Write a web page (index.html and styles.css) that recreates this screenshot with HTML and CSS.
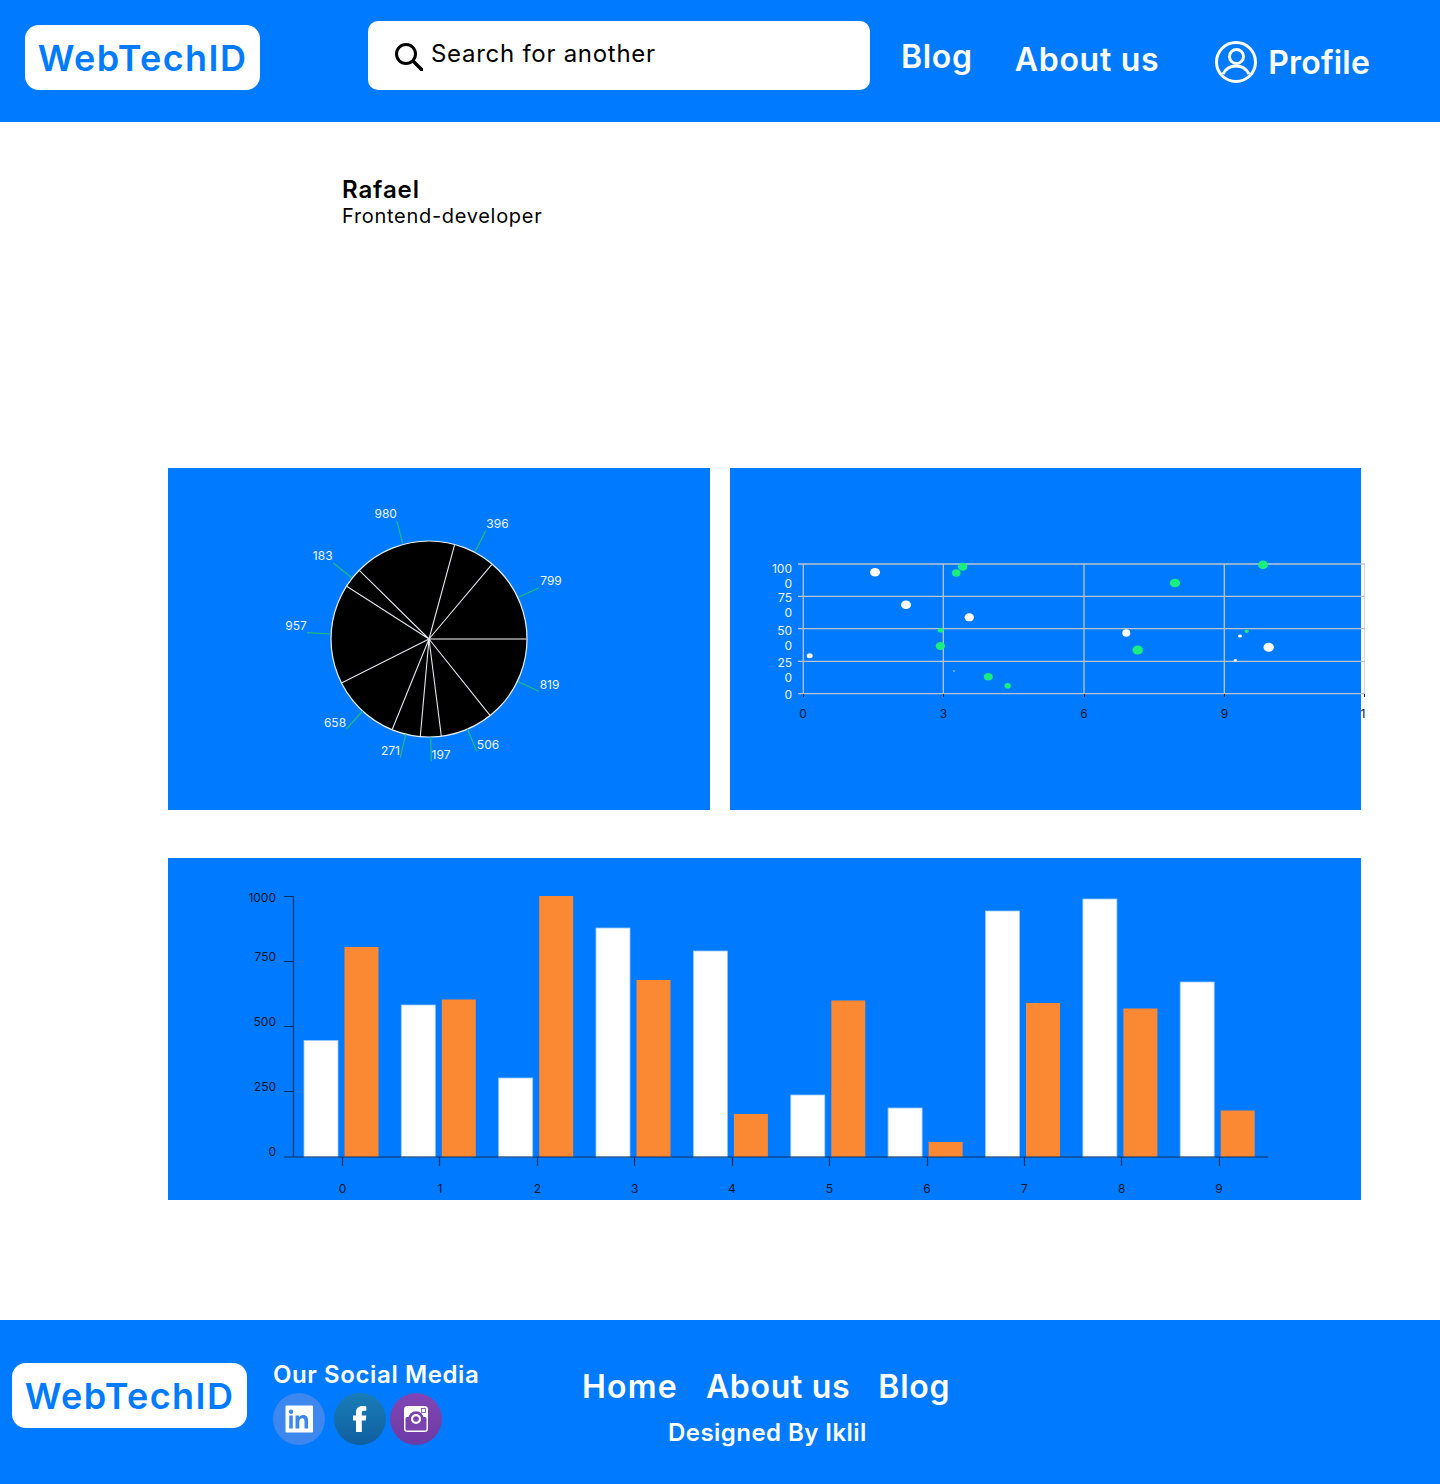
FILE: index.html
```html
<!DOCTYPE html>
<html lang="en">
<head>
<meta charset="utf-8">
<title>WebTechID</title>
<link rel="stylesheet" href="styles.css">
</head>
<body>
<header class="topbar">
  <a class="logo logo-top">WebTechID</a>
  <div class="search">
    <svg class="search-icon" width="28" height="28" viewBox="0 0 28 28"><circle cx="11" cy="11" r="9.5" fill="none" stroke="#000" stroke-width="3"/><path d="M18 18l9 9" stroke="#000" stroke-width="3.4" stroke-linecap="round"/></svg>
    <span class="search-text">Search for another</span>
  </div>
  <a class="nav nav-blog">Blog</a>
  <a class="nav nav-about">About us</a>
  <div class="profile">
    <svg width="42" height="42" viewBox="0 0 42 42" fill="none" stroke="#fff" stroke-width="3"><circle cx="21" cy="21" r="19.5"/><circle cx="21.500" cy="15.500" r="7"/><path d="M8 33c2.500-5 7-8 13-8s10.500 3 13 8"/></svg>
    <a class="nav nav-profile">Profile</a>
  </div>
</header>

<main class="content">
  <section class="person">
    <h1 class="person-name">Rafael</h1>
    <p class="person-role">Frontend-developer</p>
  </section>

  <section class="charts">
    <div class="card">
      <svg class="chart" width="542" height="342" viewBox="168 468 542 342">
        <circle cx="429" cy="639" r="98" fill="#000" stroke="#e8eef8" stroke-width="1.200"/>
        <g stroke="#e4e8ee" stroke-width="1.100">
          <path d="M429 639H527" stroke-width="1.600" stroke="#a8a8a8"/>
          <path d="M429 639L491.700 564.700M429 639L454.700 544.300M429 639L359.300 570.300M429 639L346.700 586.300M429 639L342 682.700M429 639L392.300 729.300M429 639L420.300 736.300M429 639L441.300 736M429 639L490 715.300"/>
        </g>
        <g stroke="#22bd78" stroke-width="1.200">
          <path d="M485.700 530.700L475 551.700M539.300 587.700L518.300 597.300M539 691.300L518.300 681.700M476.700 751.300L467.300 728.700M431.300 761.300L430.700 737M400.300 757.700L405.700 734.300M346.300 729L362.700 711M307 632.700L331 634M333.300 563L351.700 577.700M397 521.300L402.700 543.300"/>
        </g>
        <g class="pie-labels" text-anchor="middle">
          <text x="385.700" y="518">980</text>
          <text x="497.500" y="528">396</text>
          <text x="551" y="584.500">799</text>
          <text x="549.500" y="689">819</text>
          <text x="488" y="749">506</text>
          <text x="441" y="759">197</text>
          <text x="390.500" y="755">271</text>
          <text x="335" y="727">658</text>
          <text x="296" y="630">957</text>
          <text x="322.700" y="560">183</text>
        </g>
      </svg>
    </div>

    <div class="card card-scatter">
      <svg class="chart" width="635" height="342" viewBox="730 468 635 342">
        <g stroke="#b9c4d3" stroke-width="1.300">
          <path d="M798 564H1365M798 596.300H1365M798 628.700H1365M798 661.300H1365M798 693.700H1365"/>
          <path d="M803.300 564V694M943.300 564V694M1084 564V694M1224.300 564V694M1365 564V694"/>
        </g>
        <path d="M803.500 694V697M943.500 694V697M1084.500 694V697M1224.500 694V697M1364.500 694V697" stroke="#0a1a30" stroke-width="1"/>
        <g class="scatter-y" text-anchor="end">
          <text x="792" y="573">100</text>
          <text x="792" y="588">0</text>
          <text x="792" y="602">75</text>
          <text x="792" y="617">0</text>
          <text x="792" y="635">50</text>
          <text x="792" y="650">0</text>
          <text x="792" y="667">25</text>
          <text x="792" y="682">0</text>
          <text x="792" y="699">0</text>
        </g>
        <g class="axis-text" text-anchor="middle">
          <text x="803" y="718">0</text>
          <text x="943.500" y="718">3</text>
          <text x="1084" y="718">6</text>
          <text x="1224.500" y="718">9</text>
          <text x="1363" y="718">1</text>
        </g>
        <g fill="#fff">
          <ellipse cx="875" cy="572.300" rx="5" ry="4.300"/>
          <ellipse cx="906" cy="604.700" rx="5" ry="4.300"/>
          <ellipse cx="969.300" cy="617.300" rx="4.700" ry="4"/>
          <ellipse cx="809.700" cy="655.700" rx="3" ry="2.500"/>
          <ellipse cx="954" cy="671" rx=".7" ry=".7"/>
          <ellipse cx="1126.300" cy="633" rx="4" ry="3.700"/>
          <ellipse cx="1240" cy="636" rx="2" ry="1.600"/>
          <ellipse cx="1268.700" cy="647.300" rx="5.200" ry="4.500"/>
          <ellipse cx="1235.300" cy="660.300" rx="1.500" ry="1.200"/>
        </g>
        <g fill="#19ee7e">
          <ellipse cx="962.700" cy="566.700" rx="4.700" ry="4"/>
          <ellipse cx="956.300" cy="573" rx="4.300" ry="3.700"/>
          <ellipse cx="940.700" cy="630.300" rx="3" ry="2.300"/>
          <ellipse cx="940.300" cy="646" rx="4.700" ry="4"/>
          <ellipse cx="988.300" cy="676.700" rx="4.500" ry="3.800"/>
          <ellipse cx="1007.700" cy="685.700" rx="3.200" ry="2.800"/>
          <ellipse cx="1263" cy="564.700" rx="5" ry="4.300"/>
          <ellipse cx="1175" cy="583" rx="5.200" ry="4.300"/>
          <ellipse cx="1137.700" cy="650" rx="5.200" ry="4.500"/>
          <ellipse cx="1246.700" cy="631.300" rx="2" ry="1.700"/>
        </g>
      </svg>
    </div>

    <div class="card card-wide">
      <svg class="chart" width="1193" height="342" viewBox="168 858 1193 342">
        <g class="bars-white" fill="#fff" stroke="#9cc8ff" stroke-width=".8">
          <rect x="304" y="1040.500" width="34" height="116.500"/>
          <rect x="401.300" y="1005" width="34" height="152"/>
          <rect x="498.700" y="1078" width="34" height="79"/>
          <rect x="596" y="928" width="34" height="229"/>
          <rect x="693.400" y="951" width="34" height="206"/>
          <rect x="790.800" y="1095" width="34" height="62"/>
          <rect x="888.100" y="1108" width="34" height="49"/>
          <rect x="985.500" y="911" width="34" height="246"/>
          <rect x="1082.900" y="899" width="34" height="258"/>
          <rect x="1180.200" y="982" width="34" height="175"/>
        </g>
        <g fill="#fb8832">
          <rect x="344.500" y="947" width="34" height="210"/>
          <rect x="441.800" y="999.500" width="34" height="157.500"/>
          <rect x="539.200" y="896" width="34" height="261"/>
          <rect x="636.500" y="980" width="34" height="177"/>
          <rect x="733.900" y="1114" width="34" height="43"/>
          <rect x="831.300" y="1000.500" width="34" height="156.500"/>
          <rect x="928.600" y="1142" width="34" height="15"/>
          <rect x="1026" y="1003" width="34" height="154"/>
          <rect x="1123.400" y="1008.500" width="34" height="148.500"/>
          <rect x="1220.700" y="1110.500" width="34" height="46.500"/>
        </g>
        <g stroke="#0b2f5c" stroke-width="1.200">
          <path d="M293.500 896V1157M284 896.500H293.500M284 961.500H293.500M284 1026.500H293.500M284 1091.500H293.500M284 1157H1268"/>
          <path d="M342.500 1157V1166M439.500 1157V1166M537.500 1157V1166M634.500 1157V1166M732.500 1157V1166M829.500 1157V1166M927.500 1157V1166M1024.500 1157V1166M1121.500 1157V1166M1219.500 1157V1166"/>
        </g>
        <g class="axis-text" text-anchor="end">
          <text x="276" y="902">1000</text>
          <text x="276" y="961">750</text>
          <text x="276" y="1026">500</text>
          <text x="276" y="1091">250</text>
          <text x="276" y="1156">0</text>
        </g>
        <g class="axis-text" text-anchor="middle">
          <text x="342.500" y="1193">0</text>
          <text x="440" y="1193">1</text>
          <text x="537.300" y="1193">2</text>
          <text x="634.700" y="1193">3</text>
          <text x="732" y="1193">4</text>
          <text x="829.500" y="1193">5</text>
          <text x="927" y="1193">6</text>
          <text x="1024.300" y="1193">7</text>
          <text x="1121.700" y="1193">8</text>
          <text x="1219" y="1193">9</text>
        </g>
      </svg>
    </div>
  </section>
</main>

<footer class="footer">
  <a class="logo logo-bottom">WebTechID</a>
  <div class="social">
    <h2 class="social-title">Our Social Media</h2>
    <div class="social-icons">
      <a class="social-btn social-in">
        <svg width="28" height="28" viewBox="0 0 28 28"><rect x=".5" y=".5" width="27.500" height="27" rx="1" fill="#fff"/><g fill="#3d87ef"><circle cx="6" cy="6.800" r="2.200"/><rect x="4.200" y="10.500" width="3.600" height="13"/><path d="M10.500 10.500h3.500v1.800c.9-1.400 2.300-2.200 4.100-2.200 3.500 0 5 2.200 5 6v7.400h-3.600v-6.800c0-2.200-.6-3.500-2.300-3.500-1.800 0-2.900 1.300-2.900 3.500v6.800h-3.800z"/></g></svg>
      </a>
      <a class="social-btn social-fb">
        <svg width="14" height="26" viewBox="0 0 14 26"><path fill="#fff" d="M3 26V14.500H0V9.500H3V6.500C3 2.200 5.500 0 9.500 0c1.700 0 3.200.1 3.800.2V4.700h-2.500C9.300 4.700 8.800 5.500 8.800 7v2.500h4.500L12.700 14.500H8.800V26z"/></svg>
      </a>
      <a class="social-btn social-ig">
        <svg width="26" height="26" viewBox="0 0 26 26"><rect x="1" y="0" width="24" height="26" rx="3.500" fill="#fff"/><rect x="2.500" y="11" width="21" height="13.500" rx="1.500" fill="#7a42ae"/><circle cx="13" cy="13" r="7.800" fill="#7a42ae"/><circle cx="13" cy="13" r="5" fill="#fff"/><circle cx="13" cy="13" r="2.800" fill="#7a42ae"/><rect x="18.500" y="2.500" width="4" height="4" fill="#fff" stroke="#7a42ae" stroke-width=".8"/></svg>
      </a>
    </div>
  </div>
  <div class="footer-links">
    <nav class="footer-nav">
      <a class="nav nav-home">Home</a>
      <a class="nav">About us</a>
      <a class="nav">Blog</a>
    </nav>
    <p class="credit">Designed By Iklil</p>
  </div>
</footer>
</body>
</html>
```
FILE: styles.css
```css
* { box-sizing: border-box; }

html, body {
  margin: 0;
  padding: 0;
}

body {
  width: 1440px;
  background: #fff;
  color: #000;
  font-family: Inter, "Noto Sans", sans-serif;
}

a { color: inherit; text-decoration: none; }

.logo {
  display: flex;
  align-items: center;
  justify-content: center;
  width: 235px;
  height: 65px;
  background: #fff;
  border-radius: 14px;
  color: #007bff;
  font-size: 36px;
  font-weight: 600;
  letter-spacing: 1.4px;
  flex: none;
}

.topbar {
  display: flex;
  align-items: flex-start;
  height: 122px;
  padding: 0 0 0 25px;
  background: #007bff;
}

.logo-top { margin-top: 25px; }

.search {
  display: flex;
  align-items: center;
  width: 502px;
  height: 69px;
  margin: 21px 0 0 108px;
  padding: 0 0 5px 27px;
  background: #fff;
  border-radius: 10px;
  flex: none;
}

.search-icon { flex: none; margin-top: 7px; }

.search-text {
  margin-left: 8px;
  font-size: 24px;
  letter-spacing: .72px;
  white-space: nowrap;
}

.nav {
  color: #fff;
  font-size: 32px;
  font-weight: 600;
  line-height: 40px;
  letter-spacing: .7px;
  white-space: nowrap;
}

.nav-blog { margin: 37px 0 0 31px; }
.nav-about { margin: 40px 0 0 42px; }

.profile {
  display: flex;
  align-items: center;
  gap: 11px;
  margin: 41px 0 0 56px;
}

.nav-profile {
  margin-top: 1px;
  letter-spacing: .2px;
}

.nav-home { letter-spacing: 1.2px; }

.content { height: 1198px; }

.person {
  height: 346px;
  padding: 54px 0 0 342px;
}

.person-name {
  margin: 0;
  font-size: 24px;
  font-weight: 600;
  line-height: 28px;
  letter-spacing: .9px;
}

.person-role {
  margin: 0;
  font-size: 20px;
  line-height: 24px;
  letter-spacing: .7px;
}

.charts {
  display: grid;
  grid-template-columns: 542px 631px;
  grid-auto-rows: 342px;
  column-gap: 20px;
  row-gap: 48px;
  margin-left: 168px;
}

.card { background: #007bff; }

.card-wide { grid-column: 1 / span 2; }

.chart {
  display: block;
  font-family: Inter, sans-serif;
}

.pie-labels {
  fill: #f0f5ff;
  font-size: 12px;
}

.scatter-y {
  fill: #eef4ff;
  font-size: 12px;
}

.axis-text {
  fill: #04152e;
  font-size: 12px;
}

.footer {
  display: flex;
  align-items: flex-start;
  height: 164px;
  padding-left: 12px;
  background: #007bff;
  color: #fff;
}

.logo-bottom { margin-top: 43px; }

.social {
  margin: 39px 0 0 26px;
  width: 310px;
  flex: none;
}

.social-title {
  margin: 0;
  font-size: 24px;
  font-weight: 600;
  line-height: 32px;
  letter-spacing: .6px;
  white-space: nowrap;
}

.social-icons {
  display: flex;
  margin-top: 2px;
}

.social-btn {
  display: flex;
  align-items: center;
  justify-content: center;
  width: 52px;
  height: 52px;
  border-radius: 50%;
}

.social-in { background: #3d87ef; margin-right: 9px; }
.social-fb { background: linear-gradient(#1a7db8, #0f5f9f); margin-right: 4px; }
.social-ig { background: linear-gradient(#8146b5, #6c3aa4); }

.footer-links {
  margin: 47px 0 0 -1px;
}

.footer-nav {
  display: flex;
  gap: 28px;
}

.credit {
  margin: 10px 0 0 86px;
  font-size: 24px;
  font-weight: 600;
  line-height: 32px;
  letter-spacing: .45px;
  white-space: nowrap;
}
```
